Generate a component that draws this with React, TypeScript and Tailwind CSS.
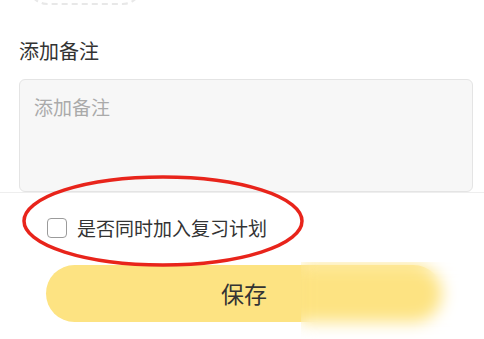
const font = { fontFamily: '"Noto Sans CJK SC", "Noto Sans", sans-serif' };

export default function App() {
  return (
    <div className="relative h-[339px] w-[484px] overflow-hidden bg-white" style={font}>
      {/* cut-off dashed pill from the section above */}
      <div className="-mt-[36px] ml-[27px] h-[41px] w-[116px] rounded-full border-2 border-dashed border-[#e8e8e8]" />

      <h2 className="mt-[32px] px-[19px] text-[20px] leading-[28px] text-[#333333]">添加备注</h2>

      <div className="ml-[19px] mr-[11px] mt-[14px] h-[113px] rounded-[6px] border border-[#e4e4e4] bg-[#f7f7f7] px-[14px] pt-[14px] text-[19px] leading-[26px] text-[#aaaaaa]">
        添加备注
      </div>

      <div className="h-px w-full bg-[#eeeeee]" />

      <label className="mt-[22px] flex items-center gap-[10px] pl-[47px]">
        <span className="h-[20px] w-[20px] rounded-[4px] border-[1.5px] border-[#9b9b9b] bg-white" />
        <span className="text-[19px] leading-[26px] text-[#333333]">是否同时加入复习计划</span>
      </label>

      <button className="mt-[24px] ml-[46px] flex h-[57px] w-[396px] items-center justify-center rounded-full bg-[#fde382] text-[23px] text-[#333333]">
        保存
      </button>

      {/* red annotation ellipse */}
      <svg className="absolute left-0 top-0" width="484" height="339" viewBox="0 0 484 339">
        <ellipse cx="163" cy="221" rx="139" ry="44" fill="none" stroke="#e8241b" strokeWidth="3.5" />
      </svg>

      {/* blurred patch */}
      <div className="absolute left-[301px] top-[262px] h-[77px] w-[183px] backdrop-blur-[8px]" />
    </div>
  );
}
